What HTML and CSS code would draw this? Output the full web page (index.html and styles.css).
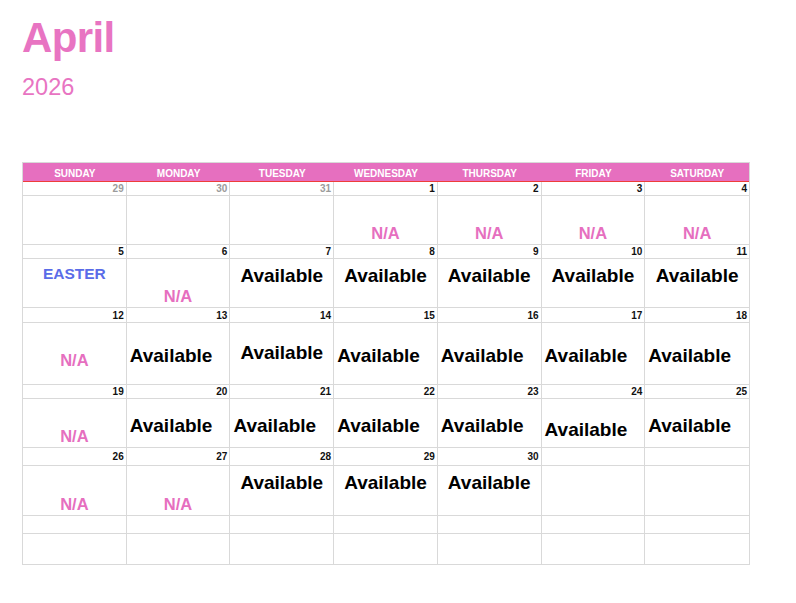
FILE: index.html
```html
<!DOCTYPE html>
<html lang="en">
<head>
<meta charset="utf-8">
<title>April 2026</title>
<link rel="stylesheet" href="styles.css">
</head>
<body>
<div class="page">
  <h1 class="month">April</h1>
  <div class="year">2026</div>
  <div class="cal">
    <div class="hd">SUNDAY</div>
    <div class="hd">MONDAY</div>
    <div class="hd">TUESDAY</div>
    <div class="hd">WEDNESDAY</div>
    <div class="hd">THURSDAY</div>
    <div class="hd">FRIDAY</div>
    <div class="hd">SATURDAY</div>

    <div class="num muted">29</div>
    <div class="num muted">30</div>
    <div class="num muted">31</div>
    <div class="num">1</div>
    <div class="num">2</div>
    <div class="num">3</div>
    <div class="num">4</div>
    <div class="c"></div>
    <div class="c"></div>
    <div class="c"></div>
    <div class="c bot ctr"><span class="na">N/A</span></div>
    <div class="c bot ctr"><span class="na">N/A</span></div>
    <div class="c bot ctr"><span class="na">N/A</span></div>
    <div class="c bot ctr"><span class="na">N/A</span></div>

    <div class="num">5</div>
    <div class="num">6</div>
    <div class="num">7</div>
    <div class="num">8</div>
    <div class="num">9</div>
    <div class="num">10</div>
    <div class="num">11</div>
    <div class="c top ctr"><span class="holiday">EASTER</span></div>
    <div class="c bot ctr"><span class="na">N/A</span></div>
    <div class="c top ctr"><span class="av">Available</span></div>
    <div class="c top ctr"><span class="av">Available</span></div>
    <div class="c top ctr"><span class="av">Available</span></div>
    <div class="c top ctr"><span class="av">Available</span></div>
    <div class="c top ctr"><span class="av">Available</span></div>

    <div class="num">12</div>
    <div class="num">13</div>
    <div class="num">14</div>
    <div class="num">15</div>
    <div class="num">16</div>
    <div class="num">17</div>
    <div class="num">18</div>
    <div class="c low ctr"><span class="na">N/A</span></div>
    <div class="c mid lft"><span class="av">Available</span></div>
    <div class="c mid-hi ctr"><span class="av">Available</span></div>
    <div class="c mid lft"><span class="av">Available</span></div>
    <div class="c mid lft"><span class="av">Available</span></div>
    <div class="c mid lft"><span class="av">Available</span></div>
    <div class="c mid lft"><span class="av">Available</span></div>

    <div class="num">19</div>
    <div class="num">20</div>
    <div class="num">21</div>
    <div class="num">22</div>
    <div class="num">23</div>
    <div class="num">24</div>
    <div class="num">25</div>
    <div class="c bot ctr"><span class="na">N/A</span></div>
    <div class="c mid lft"><span class="av">Available</span></div>
    <div class="c mid lft"><span class="av">Available</span></div>
    <div class="c mid lft"><span class="av">Available</span></div>
    <div class="c mid lft"><span class="av">Available</span></div>
    <div class="c low lft"><span class="av">Available</span></div>
    <div class="c mid lft"><span class="av">Available</span></div>

    <div class="num">26</div>
    <div class="num">27</div>
    <div class="num">28</div>
    <div class="num">29</div>
    <div class="num">30</div>
    <div class="num"></div>
    <div class="num"></div>
    <div class="c bot ctr"><span class="na">N/A</span></div>
    <div class="c bot ctr"><span class="na">N/A</span></div>
    <div class="c top ctr"><span class="av">Available</span></div>
    <div class="c top ctr"><span class="av">Available</span></div>
    <div class="c top ctr"><span class="av">Available</span></div>
    <div class="c"></div>
    <div class="c"></div>

    <div class="c"></div>
    <div class="c"></div>
    <div class="c"></div>
    <div class="c"></div>
    <div class="c"></div>
    <div class="c"></div>
    <div class="c"></div>

    <div class="c last"></div>
    <div class="c last"></div>
    <div class="c last"></div>
    <div class="c last"></div>
    <div class="c last"></div>
    <div class="c last"></div>
    <div class="c last"></div>
  </div>
</div>
</body>
</html>
```

FILE: styles.css
```css
* { box-sizing: border-box; }

html, body {
  margin: 0;
  padding: 0;
  background: #ffffff;
}

body {
  font-family: "Liberation Sans", Arial, Helvetica, sans-serif;
  color: #000;
}

.page {
  padding: 14px 0 0 22px;
}

.month {
  margin: 0;
  font-size: 42px;
  line-height: 48px;
  font-weight: 700;
  letter-spacing: -0.6px;
  color: #e874c2;
}

.year {
  margin-top: 12px;
  font-size: 23.5px;
  line-height: 26px;
  font-weight: 400;
  color: #e874c2;
}

.cal {
  margin-top: 62px;
  width: 728px;
  border: 1px solid #d9d9d9;
  display: grid;
  grid-template-columns: repeat(7, 1fr);
  grid-template-rows: 19px 14px 49px 14px 49px 15px 62px 14px 49px 18px 50px 18px 30px;
}

.hd {
  background: #e66fbf;
  border-bottom: 1px solid #ee3d3a;
  color: #ffffff;
  font-size: 10px;
  font-weight: 700;
  display: flex;
  align-items: center;
  justify-content: center;
  padding-top: 2px;
}

.num {
  border-right: 1px solid #d9d9d9;
  border-bottom: 1px solid #d9d9d9;
  font-size: 10px;
  font-weight: 700;
  display: flex;
  align-items: center;
  justify-content: flex-end;
  padding-right: 2px;
  color: #111;
}

.num.muted { color: #9b9b9b; }

.c {
  border-right: 1px solid #d9d9d9;
  border-bottom: 1px solid #d9d9d9;
  display: flex;
}

.num:nth-child(7n), .c:nth-child(7n) { border-right: none; }
.c.last { border-bottom: none; }

.top { align-items: flex-start; padding-top: 6px; }
.bot { align-items: flex-end; padding-bottom: 2px; }
.mid { align-items: center; padding-top: 5px; }
.mid-hi { align-items: center; padding-bottom: 2px; }
.low { align-items: center; padding-top: 13px; }

.ctr { justify-content: center; }
.lft { justify-content: flex-start; padding-left: 3px; }

.na {
  font-size: 16.5px;
  line-height: 18px;
  font-weight: 700;
  color: #e66fbf;
}

.holiday {
  font-size: 15.5px;
  line-height: 18px;
  font-weight: 700;
  color: #5a6ce8;
}

.av {
  font-size: 19px;
  line-height: 22px;
  font-weight: 700;
  color: #000;
}
```
